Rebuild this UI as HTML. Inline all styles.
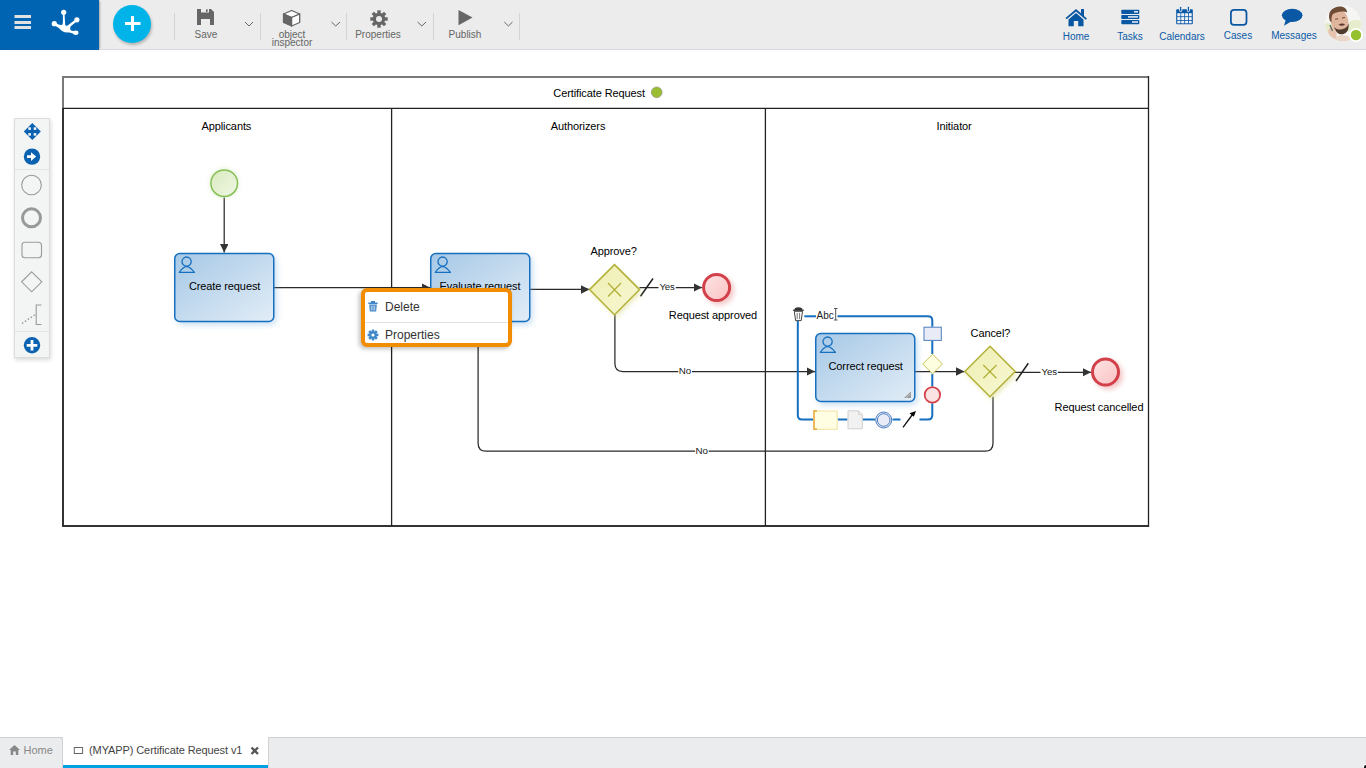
<!DOCTYPE html>
<html><head><meta charset="utf-8">
<style>
html,body{margin:0;padding:0;width:1366px;height:768px;overflow:hidden;background:#fff;font-family:"Liberation Sans",sans-serif;}
.a{position:absolute;}
#hdr{position:absolute;left:0;top:0;width:1366px;height:49px;background:#ebeceb;border-bottom:1px solid #d6dbe1;}
#blue{position:absolute;left:0;top:0;width:99px;height:50px;background:#0064b2;box-shadow:2px 0 2px -1px rgba(0,0,0,.3);}
.tb{position:absolute;top:30px;font-size:10px;color:#666;text-align:center;line-height:10px;}
.sep{position:absolute;top:13px;width:1px;height:27px;background:#d4d4d4;}
.nav{position:absolute;top:32px;font-size:10px;color:#0a5aa8;text-align:center;line-height:10px;}
#bot{position:absolute;left:0;top:737px;width:1366px;height:31px;background:#ebecee;border-top:1px solid #d0d1d3;}
</style></head><body>
<div id="hdr"></div>
<div id="blue"></div>
<svg class="a" style="left:0;top:0" width="100" height="50">
 <g fill="#e2e2e2"><rect x="14.5" y="15" width="16.5" height="3"/><rect x="14.5" y="21" width="16.5" height="3"/><rect x="14.5" y="26" width="16.5" height="3"/></g>
 <g fill="#fff">
  <circle cx="63.7" cy="12.3" r="2.6"/><circle cx="54.3" cy="23.7" r="2.6"/><circle cx="76.9" cy="19.8" r="2.6"/><ellipse cx="75.8" cy="32.8" rx="2.7" ry="2.2"/>
  <path d="M62.9 13 H64.5 L65.2 25 Q66 26.5 68 25.3 L76 19 L77.5 20.8 L70.5 26.5 Q69.5 29 71 30.5 L76 31.5 L75.5 34.3 L69.5 32.5 Q65 33 62 31 Q59.5 28 54 25 L55 22.5 Q59.5 25.5 62 25 Q63 24 62.9 22 Z"/>
 </g>
</svg>
<div class="a" style="left:113px;top:5px;width:38px;height:38px;border-radius:50%;background:#00b4ea;box-shadow:1px 2px 3px rgba(0,0,0,.25);"></div>
<svg class="a" style="left:113px;top:5px" width="38" height="38"><g fill="#fff"><rect x="12" y="17" width="15.5" height="3"/><rect x="18" y="11" width="3" height="15"/></g></svg>
<div class="sep" style="left:174px"></div>
<div class="sep" style="left:260px"></div>
<div class="sep" style="left:346px"></div>
<div class="sep" style="left:433px"></div>
<div class="sep" style="left:519px"></div>
<svg class="a" style="left:0;top:0" width="540" height="50">
 <g fill="#666">
  <path d="M197 9 H211 L214 12 V25 H210 V19 H201 V25 H197 Z M201 9 V12.5 H209 V9 Z"/><rect x="206" y="9.3" width="1.6" height="2.6"/>
 </g>
 <g fill="none" stroke="#666" stroke-width="1">
  <path d="M245 22 L249 26 L253 22"/><path d="M331.5 22 L335.7 26 L340 22"/><path d="M417.6 22 L421.8 26 L426 22"/><path d="M504.3 22 L508.4 26 L512.5 22"/>
 </g>
 <g stroke="#666" stroke-width="1.3" stroke-linejoin="round">
  <path d="M291.6 10.5 L299.7 14 L291.6 17.5 L283.5 14 Z" fill="#fff"/>
  <path d="M283.5 14 L291.6 17.5 V26 L283.5 22.5 Z" fill="#666"/>
  <path d="M291.6 17.5 L299.7 14 V22.5 L291.6 26 Z" fill="#fff"/>
 </g>
 <path d="M458.5 10 L472.5 17.6 L458.5 25.2 Z" fill="#666"/>
</svg>
<svg class="a" style="left:369px;top:9px" width="20" height="20" viewBox="-10 -10 20 20">
 <g fill="#666"><circle r="6.2"/>
 <g id="teeth"><rect x="-1.7" y="-8.7" width="3.4" height="4"/><rect x="-1.7" y="4.7" width="3.4" height="4"/></g>
 <use href="#teeth" transform="rotate(45)"/><use href="#teeth" transform="rotate(90)"/><use href="#teeth" transform="rotate(135)"/>
 </g><circle r="3" fill="#ececec"/>
</svg>
<svg class="a" style="left:1050px;top:0" width="316" height="50">
 <g fill="#0a57a4">
  <path d="M1065.5 18 L1076 9 L1081 13.3 V9 H1084 V15.9 L1087 18.5 L1085.8 19.8 L1076 11.4 L1066.7 19.3 Z" transform="translate(-1050 0)"/>
  <path d="M1068.5 19.5 L1076 13 L1083.5 19.5 V26.2 H1078.2 V21 H1073.8 V26.2 H1068.5 Z" transform="translate(-1050 0)"/>
 </g>
 <g transform="translate(-1050 0)">
  <rect x="1121.3" y="9.8" width="18" height="4.2" rx="0.8" fill="#0a57a4"/>
  <rect x="1121.3" y="14.9" width="18" height="4.2" rx="0.8" fill="#0a57a4"/>
  <rect x="1121.3" y="20" width="18" height="4.2" rx="0.8" fill="#0a57a4"/>
  <rect x="1134" y="11" width="4" height="1.6" fill="#dde6f0"/>
  <rect x="1128" y="16.1" width="10" height="1.6" fill="#dde6f0"/>
  <rect x="1132" y="21.2" width="6" height="1.6" fill="#dde6f0"/>
  <rect x="1176.2" y="9.2" width="16.6" height="15.1" rx="1" fill="#0a57a4"/>
  <g fill="#eef2f8"><rect x="1177.3" y="13.2" width="3.1" height="3.1"/><rect x="1181.2" y="13.2" width="3.1" height="3.1"/><rect x="1185.1" y="13.2" width="3.1" height="3.1"/><rect x="1189" y="13.2" width="2.7" height="3.1"/>
  <rect x="1177.3" y="17.1" width="3.1" height="3.1"/><rect x="1181.2" y="17.1" width="3.1" height="3.1"/><rect x="1185.1" y="17.1" width="3.1" height="3.1"/><rect x="1189" y="17.1" width="2.7" height="3.1"/>
  <rect x="1177.3" y="21" width="3.1" height="2.3"/><rect x="1181.2" y="21" width="3.1" height="2.3"/><rect x="1185.1" y="21" width="3.1" height="2.3"/><rect x="1189" y="21" width="2.7" height="2.3"/></g>
  <rect x="1179.6" y="6.4" width="2.2" height="5.2" rx="1.1" fill="#0a57a4" stroke="#f4f6fa" stroke-width="0.9"/>
  <rect x="1187.3" y="6.4" width="2.2" height="5.2" rx="1.1" fill="#0a57a4" stroke="#f4f6fa" stroke-width="0.9"/>
  <rect x="1230.9" y="9.9" width="15.6" height="15" rx="3.2" fill="none" stroke="#0a57a4" stroke-width="1.75"/>
  <ellipse cx="1292.2" cy="15.3" rx="10.3" ry="6.6" fill="#0a57a4"/>
  <path d="M1286 19 L1284 25.8 L1292 21 Z" fill="#0a57a4"/>
 </g>
</svg>
<div class="nav" style="left:1056px;width:40px;">Home</div>
<div class="nav" style="left:1110px;width:40px;">Tasks</div>
<div class="nav" style="left:1157px;width:50px;top:32px;">Calendars</div>
<div class="nav" style="left:1213px;width:50px;top:31px;">Cases</div>
<div class="nav" style="left:1269px;width:50px;top:31px;">Messages</div>
<svg class="a" style="left:1320px;top:0" width="46" height="50">
 <defs><clipPath id="av"><circle cx="23" cy="23.3" r="18"/></clipPath>
 <linearGradient id="avbg" x1="0" y1="0" x2="1" y2="1"><stop offset="0" stop-color="#f6f6f4"/><stop offset="1" stop-color="#e4ecc8"/></linearGradient></defs>
 <g clip-path="url(#av)">
  <rect x="0" y="0" width="46" height="50" fill="#f5f5f3"/>
  <ellipse cx="36" cy="27" rx="10" ry="7" fill="#e6edcc"/>
  <ellipse cx="8" cy="32" rx="6" ry="9" fill="#e4ebc8"/>
  <path d="M10 46 C12 38 17 35 22 35 L28 36 C32 38 34 42 35 46 Z" fill="#e9d6c8"/>
  <g transform="rotate(-10 20 21)">
   <ellipse cx="19.5" cy="21" rx="8.8" ry="12" fill="#dfb59c"/>
   <path d="M10 19 C9 10 14 6.5 20 6.5 C26 6.5 29 9.5 28.5 14 C25.5 11.5 19 11 14 13 C12.5 15 11.8 17 11.5 21 Z" fill="#6e4c36"/>
   <path d="M13 26 C14 32 17 34.5 20.5 34.5 C24 34.5 27.5 32 28 25 C26.5 28 24.5 29.5 20.5 29.5 C17 29.5 15 28 13 26 Z" fill="#4e3a2c"/>
   <path d="M18 24.5 Q21 23 24.5 25 Q21 27.5 18 24.5 Z" fill="#5a3a30"/>
   <path d="M15.5 18.5 H18.5 M22.5 18.5 H25.5" stroke="#6a4a3a" stroke-width="1"/>
  </g>
  <ellipse cx="12.5" cy="33" rx="4" ry="6" fill="#e8c4b0" transform="rotate(-20 12.5 33)"/>
  <path d="M10 25 L12.5 31" stroke="#5a6a60" stroke-width="1.3"/>
 </g>
 <circle cx="36" cy="35" r="7" fill="#fff"/>
 <circle cx="36" cy="35" r="5.2" fill="#96c12f"/>
</svg>
<div class="tb" style="left:186px;width:40px;">Save</div>
<div class="tb" style="left:262px;width:60px;line-height:8px;top:31px;">object<br>inspector</div>
<div class="tb" style="left:348px;width:60px;">Properties</div>
<div class="tb" style="left:440px;width:50px;">Publish</div>

<div class="a" style="left:14px;top:118px;width:34px;height:238px;background:#f3f4f4;border:1px solid #dcdcdc;box-shadow:1px 2px 4px rgba(0,0,0,.15);"></div>
<div class="a" style="left:15px;top:169px;width:34px;height:1px;background:#e4e4e4;"></div>
<div class="a" style="left:15px;top:331px;width:34px;height:1px;background:#e4e4e4;"></div>
<svg class="a" style="left:0;top:100px" width="60" height="270">
 <g transform="translate(0,-100)">
  <path d="M32.3 123 L40.8 131.5 L32.3 140 L23.8 131.5 Z" fill="#0a62b0"/><g fill="#f3f4f4"><rect x="28.3" y="127.3" width="2.6" height="2.6"/><rect x="33.7" y="127.3" width="2.6" height="2.6"/><rect x="28.3" y="133.1" width="2.6" height="2.6"/><rect x="33.7" y="133.1" width="2.6" height="2.6"/></g>
  <circle cx="32" cy="156.6" r="8.2" fill="#0a62b0"/>
  <path d="M27 155.2 H31 V152.3 L36.2 156.6 L31 160.9 V158 H27 Z" fill="#fff"/>
  <circle cx="31.5" cy="185" r="9.8" fill="none" stroke="#9a9a9a" stroke-width="1.1"/>
  <circle cx="31.5" cy="217.8" r="9" fill="none" stroke="#999" stroke-width="3"/>
  <rect x="22" y="242.3" width="19.5" height="15.4" rx="3" fill="none" stroke="#9a9a9a" stroke-width="1.1"/>
  <path d="M31.7 271.8 L41.8 281.8 L31.7 291.8 L21.6 281.8 Z" fill="none" stroke="#9a9a9a" stroke-width="1.1"/>
  <path d="M22 323.5 L36 314" fill="none" stroke="#9a9a9a" stroke-width="1.5" stroke-dasharray="1.5 2"/>
  <path d="M41.5 305 H36.2 V324.5 H41.5" fill="none" stroke="#9a9a9a" stroke-width="1.1"/>
  <circle cx="32" cy="345.3" r="8.2" fill="#0a62b0"/>
  <path d="M30.6 340 H33.4 V343.9 H37.3 V346.7 H33.4 V350.6 H30.6 V346.7 H26.7 V343.9 H30.6 Z" fill="#fff"/>
 </g>
</svg>
<div id="bot"></div>
<div class="a" style="left:0;top:737px;width:62px;height:30px;background:#ebecee;border-top:1px solid #d0d1d3;border-right:1px solid #d0d1d3;border-top-right-radius:3px;"></div>
<div class="a" style="left:63px;top:737px;width:205px;height:31px;background:#fff;"></div>
<div class="a" style="left:63px;top:765px;width:205px;height:3px;background:#00a0e3;"></div>
<div class="a" style="left:268px;top:737px;width:1px;height:31px;background:#d2d2d2;"></div>
<svg class="a" style="left:0;top:737px" width="270" height="31">
 <path d="M14.5 8 L20 13 H18.3 V18 H15.8 V14.5 H13.2 V18 H10.7 V13 H9 Z" fill="#888"/>
 <rect x="74.3" y="10.5" width="8.3" height="6" fill="none" stroke="#666" stroke-width="1"/>
 <path d="M251.5 10.5 L258 17 M258 10.5 L251.5 17" stroke="#555" stroke-width="2.3"/>
</svg>
<div class="a" style="left:23.5px;top:743px;font-size:11px;color:#888;line-height:14px;">Home</div>
<div class="a" style="left:89px;top:743px;font-size:11px;color:#444;line-height:14px;letter-spacing:-0.1px;">(MYAPP) Certificate Request v1</div>

<svg class="a" style="left:0;top:0" width="1366" height="768" viewBox="0 0 1366 768" font-family="Liberation Sans" letter-spacing="-0.1">
 <defs>
  <linearGradient id="gTask" x1="0" y1="0" x2="1" y2="1"><stop offset="0" stop-color="#a6c8e6"/><stop offset="1" stop-color="#e2edf7"/></linearGradient>
  <linearGradient id="gGw" x1="0" y1="0" x2="1" y2="1"><stop offset="0" stop-color="#eeeeb0"/><stop offset="1" stop-color="#f8f8d6"/></linearGradient>
  <linearGradient id="gEnd" x1="0" y1="0" x2="1" y2="1"><stop offset="0" stop-color="#fde4e4"/><stop offset="1" stop-color="#fbc2c2"/></linearGradient>
  <linearGradient id="gStart" x1="0" y1="0" x2="1" y2="1"><stop offset="0" stop-color="#d9eac0"/><stop offset="1" stop-color="#f0f7e4"/></linearGradient>
  <filter id="shTask" x="-20%" y="-20%" width="150%" height="150%"><feGaussianBlur in="SourceAlpha" stdDeviation="2.5"/><feOffset dx="2" dy="3"/><feComponentTransfer><feFuncA type="linear" slope="0.35"/></feComponentTransfer><feFlood flood-color="#5b9bd5"/><feComposite operator="in" in2="SourceAlpha"/></filter>
  <filter id="glowT" x="-30%" y="-30%" width="160%" height="160%"><feGaussianBlur in="SourceGraphic" stdDeviation="3"/></filter>
  <filter id="glowB" x="-30%" y="-30%" width="160%" height="160%"><feGaussianBlur in="SourceGraphic" stdDeviation="2.5"/></filter>
  <marker id="arr" viewBox="0 0 10 10" refX="10" refY="5" markerWidth="8.5" markerHeight="8.5" markerUnits="userSpaceOnUse" orient="auto"><path d="M0 0 L10 5 L0 10 Z" fill="#333"/></marker>
  <g id="user"><circle cx="0" cy="0" r="4.6" fill="none" stroke="#1670bf" stroke-width="1.3"/><path d="M-7.3 10.8 Q-3.5 5 0 5 Q3.5 5 7.8 10.8 Z" fill="none" stroke="#1670bf" stroke-width="1.3" stroke-linejoin="round"/></g>
 </defs>
 <!-- pool -->
 <path d="M63 526 V108" stroke="#333" stroke-width="2" fill="none"/>
 <path d="M62 526 H1149" stroke="#333" stroke-width="2" fill="none"/>
 <path d="M63 108 V77 H1148" stroke="#7a7a7a" stroke-width="2" fill="none"/>
 <path d="M1148.5 76 V527" stroke="#222" stroke-width="1.3" fill="none"/>
 <line x1="63" y1="108.4" x2="1148" y2="108.4" stroke="#222" stroke-width="1.2"/>
 <line x1="391.6" y1="108" x2="391.6" y2="526" stroke="#222" stroke-width="1.3"/>
 <line x1="765.4" y1="108" x2="765.4" y2="526" stroke="#222" stroke-width="1.3"/>
 <g font-size="11" fill="#000">
  <text x="553.3" y="96.9">Certificate Request</text>
  <text x="201.5" y="130.2">Applicants</text>
  <text x="550.8" y="130">Authorizers</text>
  <text x="936.5" y="130">Initiator</text>
 </g>
 <circle cx="656.7" cy="92.3" r="5.4" fill="#9bbd32" stroke="#8a8a8a" stroke-width="0.6"/>

 <!-- flows -->
 <g fill="none" stroke="#2a2a2a" stroke-width="1.25">
  <path d="M224.2 197.5 V252.5" marker-end="url(#arr)"/>
  <path d="M274 287.6 H430" marker-end="url(#arr)"/>
  <path d="M530 289.4 H589.5" marker-end="url(#arr)"/>
  <path d="M639.5 287.5 H702" marker-end="url(#arr)"/>
  <path d="M614.9 314.7 V363.5 Q614.9 371.5 622.9 371.5 H815" marker-end="url(#arr)"/>
  <path d="M478.1 322 V443.2 Q478.1 451.2 486.1 451.2 H985 Q993 451.2 993 443.2 V396.7"/>
  <path d="M915 371.5 H964.5" marker-end="url(#arr)"/>
  <path d="M1015 372.3 H1091" marker-end="url(#arr)"/>
 </g>
 <g stroke="#222" stroke-width="1.5"><path d="M640.5 296.3 L653 278.5"/><path d="M1016 381 L1028.3 363.2"/></g>
 <g font-size="9.6" fill="#222">
  <rect x="658.5" y="281" width="17.3" height="11" fill="#fff"/><text x="659.4" y="290.2">Yes</text>
  <rect x="1040.5" y="366" width="17.3" height="11" fill="#fff"/><text x="1041.5" y="375.3">Yes</text>
  <rect x="678.3" y="365.5" width="13.6" height="11" fill="#fff"/><text x="678.8" y="373.9" font-size="9.8">No</text>
  <rect x="695.1" y="445.5" width="13.6" height="11" fill="#fff"/><text x="695.6" y="453.8" font-size="9.8">No</text>
 </g>

 <!-- start -->
 <circle cx="224.2" cy="183.2" r="14" fill="#c5e0a5" filter="url(#glowB)" opacity="0.6"/>
 <circle cx="224.2" cy="183.2" r="13.3" fill="url(#gStart)" stroke="#86bf55" stroke-width="1.5"/>

 <!-- tasks -->
 <g>
  <rect x="174.75" y="253.5" width="99" height="68" rx="5" fill="#6aa6dd" opacity="0.4" filter="url(#glowT)" transform="translate(2.5,3)"/>
  <rect x="174.75" y="253.5" width="99" height="68" rx="5" fill="url(#gTask)" stroke="#1670bf" stroke-width="1.5"/>
  <use href="#user" x="186.6" y="261.6"/>
  <text x="188.9" y="290.2" font-size="11" fill="#000">Create request</text>
 </g>
 <g>
  <rect x="430.75" y="253.5" width="99" height="68" rx="5" fill="#6aa6dd" opacity="0.4" filter="url(#glowT)" transform="translate(2.5,3)"/>
  <rect x="430.75" y="253.5" width="99" height="68" rx="5" fill="url(#gTask)" stroke="#1670bf" stroke-width="1.5"/>
  <use href="#user" x="442.6" y="261.6"/>
  <text x="439.5" y="290.2" font-size="11" fill="#000">Evaluate request</text>
 </g>
 <g>
  <rect x="815.75" y="333.5" width="99" height="68" rx="5" fill="#6aa6dd" opacity="0.4" filter="url(#glowT)" transform="translate(2.5,3)"/>
  <rect x="815.75" y="333.5" width="99" height="68" rx="5" fill="url(#gTask)" stroke="#1670bf" stroke-width="1.5"/>
  <use href="#user" x="827.6" y="341.6"/>
  <text x="828.5" y="370" font-size="11" fill="#000">Correct request</text>
  <path d="M904 398 L911 391.5 V398 Z" fill="#999"/><path d="M906 398 L911 393.5" stroke="#ddd" stroke-width="0.6"/>
 </g>

 <!-- gateways -->
 <g>
  <path d="M614.5 264.6 L639.6 289.6 L614.5 314.7 L589.5 289.6 Z" fill="#d8d880" opacity="0.5" filter="url(#glowB)" transform="translate(2,3)"/>
  <path d="M614.5 264.6 L639.6 289.6 L614.5 314.7 L589.5 289.6 Z" fill="url(#gGw)" stroke="#b3b13a" stroke-width="1.5"/>
  <path d="M608 283 L621 296.5 M621 283 L608 296.5" stroke="#b3b13a" stroke-width="1.3"/>
  <text x="590.4" y="254.6" font-size="11" fill="#000">Approve?</text>
 </g>
 <g>
  <path d="M990 346.3 L1015.1 371.5 L990 396.7 L964.8 371.5 Z" fill="#d8d880" opacity="0.5" filter="url(#glowB)" transform="translate(2,3)"/>
  <path d="M990 346.3 L1015.1 371.5 L990 396.7 L964.8 371.5 Z" fill="url(#gGw)" stroke="#b3b13a" stroke-width="1.5"/>
  <path d="M983.3 365 L996.5 378.3 M996.5 365 L983.3 378.3" stroke="#b3b13a" stroke-width="1.3"/>
  <text x="970.6" y="336.9" font-size="11" fill="#000">Cancel?</text>
 </g>

 <!-- end events -->
 <circle cx="719.5" cy="290.5" r="14.5" fill="#e89a9a" opacity="0.55" filter="url(#glowB)"/>
 <circle cx="716.6" cy="287.5" r="13" fill="url(#gEnd)" stroke="#d2404a" stroke-width="3"/>
 <text x="668.8" y="319" font-size="11" fill="#000">Request approved</text>
 <circle cx="1108.5" cy="375" r="14.5" fill="#e89a9a" opacity="0.55" filter="url(#glowB)"/>
 <circle cx="1105.5" cy="372" r="13" fill="url(#gEnd)" stroke="#d2404a" stroke-width="3"/>
 <text x="1054.6" y="411.1" font-size="11" fill="#000">Request cancelled</text>

 <!-- selection toolbar -->
 <g fill="none" stroke="#1670bf" stroke-width="2">
  <path d="M804.3 316.3 H816"/>
  <path d="M837.5 316.3 H928 Q932.3 316.3 932.3 320.6 V326.7"/>
  <path d="M932.3 340.8 V354.1"/>
  <path d="M932.3 373.8 V386.5"/>
  <path d="M932.3 403.3 V415 Q932.3 419.5 928 419.5 H919.5"/>
  <path d="M900.5 419.5 H892.5"/>
  <path d="M875 419.5 H862.7"/>
  <path d="M847.4 419.5 H837.7"/>
  <path d="M813 419.5 H802 Q797.8 419.5 797.8 415 V321"/>
 </g>
 <g>
  <path d="M794.3 310 Q794.3 307.3 798.4 307.3 Q802.5 307.3 802.5 310 Z" fill="#333"/>
  <path d="M793 310.3 H803.8" stroke="#333" stroke-width="1.2"/>
  <path d="M794.3 311.3 L795.6 320.6 H801.2 L802.5 311.3 Z" fill="#fff" stroke="#444" stroke-width="1"/>
  <path d="M797.2 312.8 V319.2 M799.6 312.8 V319.2" stroke="#555" stroke-width="0.8"/>
  <text x="816.6" y="319.2" font-size="10" fill="#222">Abc</text>
  <path d="M834 308.5 H837.5 M835.7 308.5 V320 M834 320 H837.5" stroke="#555" stroke-width="1"/>
  <rect x="924" y="327.2" width="17.3" height="13.2" fill="#e9ebf7" stroke="#4d7fc0" stroke-width="1"/>
  <path d="M932.6 354.3 L942.5 364 L932.6 373.7 L922.7 364 Z" fill="#fdfde0" stroke="#c9c55a" stroke-width="1"/>
  <circle cx="932.4" cy="394.9" r="7.7" fill="#fbe3e3" stroke="#d4424c" stroke-width="1.8"/>
  <rect x="814" y="411" width="23.2" height="18.3" fill="#fffde2" stroke="#f3e2a0" stroke-width="1"/>
  <path d="M817 411 H814 V429.3 H817" fill="none" stroke="#e8a93a" stroke-width="1.5"/>
  <path d="M848 410.8 H858.5 L862.3 414.6 V428.8 H848 Z" fill="#f1f1f1" stroke="#cfcfcf" stroke-width="1"/>
  <path d="M858.5 410.8 V414.6 H862.3" fill="none" stroke="#cfcfcf" stroke-width="0.8"/>
  <circle cx="883.7" cy="420" r="8" fill="#e9ebf7" stroke="#4d7fc0" stroke-width="1"/>
  <circle cx="883.7" cy="420" r="6.3" fill="none" stroke="#4d7fc0" stroke-width="1"/>
  <path d="M903 427.3 L912.5 414.5" stroke="#111" stroke-width="1.3"/>
  <path d="M916 411 L909.5 413.3 L913.8 416.8 Z" fill="#000"/>
 </g>
</svg>
<div class="a" style="left:361px;top:288px;width:143px;height:51px;border:4px solid #f28c00;border-radius:6px;background:#fff;box-shadow:-2px 2px 4px rgba(0,0,0,.25);"></div>
<div class="a" style="left:365px;top:322px;width:143px;height:1px;background:#e2e2e2;"></div>
<svg class="a" style="left:360px;top:295px" width="30" height="50">
 <g fill="#3f87c9" transform="translate(-360,-295)">
  <path d="M368.3 302.5 H377.6 V304 H368.3 Z M371 301 H375 V302.5 H371 Z"/>
  <path d="M369.2 304.5 H376.8 L376.2 311.6 H369.8 Z"/>
 </g>
 <path d="M-11 0" />
 <g transform="translate(-360,-295)">
  <path d="M371.3 305.5 V310.5 M373 305.5 V310.5 M374.7 305.5 V310.5" stroke="#dfe9f4" stroke-width="0.8"/>
 </g>
</svg>
<svg class="a" style="left:366px;top:327.5px" width="14" height="14" viewBox="-7 -7 14 14">
 <g fill="#3f87c9"><circle r="3.6"/>
 <g id="t2"><rect x="-1.3" y="-5.4" width="2.6" height="2.6"/><rect x="-1.3" y="2.8" width="2.6" height="2.6"/></g>
 <use href="#t2" transform="rotate(45)"/><use href="#t2" transform="rotate(90)"/><use href="#t2" transform="rotate(135)"/></g>
 <circle r="1.6" fill="#fff"/>
</svg>
<div class="a" style="left:385px;top:300px;font-size:12px;color:#333;line-height:14px;">Delete</div>
<div class="a" style="left:385px;top:328px;font-size:12px;color:#333;line-height:14px;">Properties</div>
<div class="a" style="left:1364px;top:765px;width:3px;height:3px;background:#111;border-top-left-radius:2px;box-shadow:-1px -1px 0 #fff;"></div>
</body></html>
